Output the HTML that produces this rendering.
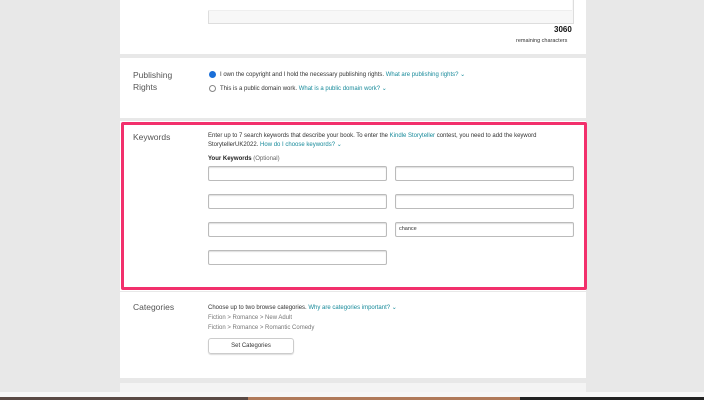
<!DOCTYPE html><html><head><style>
body{margin:0;width:704px;height:400px;background:#e8e8e8;position:relative;overflow:hidden;font-family:"Liberation Sans",sans-serif;}
.a{position:absolute}
.p{position:absolute;left:120px;width:466px;background:#fff}
.t{position:absolute;font-size:6px;color:#333;white-space:nowrap}
.l{color:#178a9a}
.h{position:absolute;font-size:8.5px;color:#555;}
.in{position:absolute;width:177px;height:13px;border:1px solid #bbb;border-radius:2px;background:#fff;box-shadow:inset 0 1px 1px #ddd}
</style></head><body>
<div class="p" style="top:0;height:54px"></div>
<div class="a" style="left:208px;top:-2px;width:364px;height:24px;border:1px solid #ddd;background:#f7f7f7"></div>
<div class="a" style="left:208px;top:-2px;width:364px;height:12px;border-bottom:1px solid #eee;background:#fff"></div>
<div class="t" style="left:554px;top:25px;font-size:8px;font-weight:bold;color:#111">3060</div>
<div class="t" style="left:516px;top:38px;font-size:5.5px">remaining characters</div>
<div class="p" style="top:58px;height:60px"></div>
<div class="h" style="left:133px;top:69px;line-height:12px">Publishing<br>Rights</div>
<div class="a" style="left:209px;top:71px;width:5px;height:5px;border-radius:50%;background:#1a6fd8;border:1px solid #1a6fd8"></div>
<div class="t" style="left:220px;top:71px">I own the copyright and I hold the necessary publishing rights. <span class="l">What are publishing rights? ⌄</span></div>
<div class="a" style="left:209px;top:85px;width:5px;height:5px;border-radius:50%;border:1px solid #888"></div>
<div class="t" style="left:220px;top:85px">This is a public domain work. <span class="l">What is a public domain work? ⌄</span></div>
<div class="p" style="top:121px;height:170px"></div>
<div class="a" style="left:121px;top:122px;width:460px;height:162px;border:3px solid #f2306c;border-radius:2px"></div>
<div class="h" style="left:133px;top:132px">Keywords</div>
<div class="t" style="left:208px;top:132px;line-height:9px">Enter up to 7 search keywords that describe your book. To enter the <span class="l">Kindle Storyteller</span> contest, you need to add the keyword<br>StorytellerUK2022. <span class="l">How do I choose keywords? ⌄</span></div>
<div class="t" style="left:208px;top:156px;font-weight:bold;color:#222">Your Keywords <span style="font-weight:normal;color:#666">(Optional)</span></div>
<div class="in" style="left:208px;top:166px"></div><div class="in" style="left:395px;top:166px"></div>
<div class="in" style="left:208px;top:194px"></div><div class="in" style="left:395px;top:194px"></div>
<div class="in" style="left:208px;top:222px"></div><div class="in" style="left:395px;top:222px"><span class="t" style="left:3px;top:3px;font-size:5.5px">chance</span></div>
<div class="in" style="left:208px;top:250px"></div>
<div class="p" style="top:292px;height:86px"></div>
<div class="h" style="left:133px;top:302px">Categories</div>
<div class="t" style="left:208px;top:304px">Choose up to two browse categories. <span class="l">Why are categories important? ⌄</span></div>
<div class="t" style="left:208px;top:315px;color:#777">Fiction &gt; Romance &gt; New Adult</div>
<div class="t" style="left:208px;top:325px;color:#777">Fiction &gt; Romance &gt; Romantic Comedy</div>
<div class="a" style="left:208px;top:338px;width:84px;height:14px;border:1px solid #ccc;border-radius:3px;box-shadow:0 1px 1px #ddd;font-size:6px;text-align:center;line-height:14px;color:#333">Set Categories</div>
<div class="p" style="top:383px;height:10px;background:#f4f4f4"></div>
<div class="a" style="left:0;top:392px;width:704px;height:5px;background:#f7f7f7"></div>
<div class="a" style="left:0;top:397px;width:248px;height:3px;background:#5a4a45"></div>
<div class="a" style="left:248px;top:397px;width:272px;height:3px;background:#b07a5a"></div>
<div class="a" style="left:520px;top:397px;width:184px;height:3px;background:#222"></div>
</body></html>
